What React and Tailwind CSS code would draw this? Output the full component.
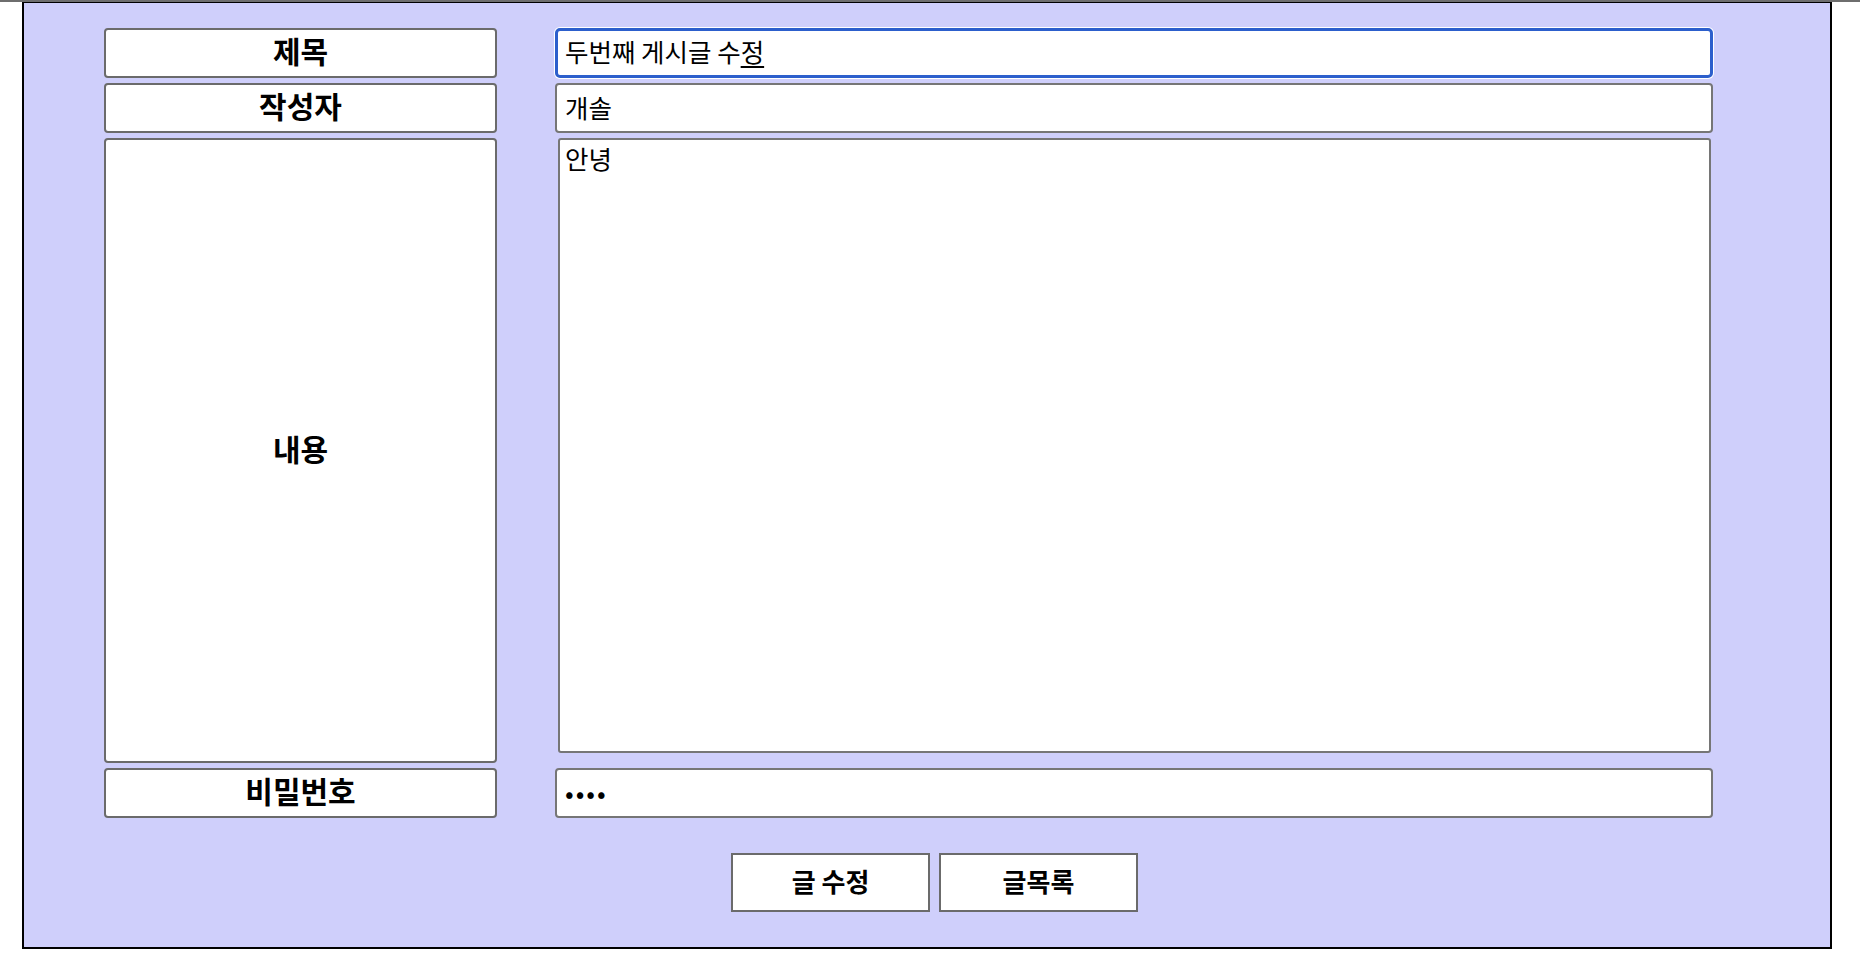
export default function App() {
  const labelBox =
    "flex items-center justify-center rounded-[4px] border-2 border-[#6b6b6b] bg-white pb-[6px] text-[30px] font-bold leading-none text-black";
  const inputBox =
    "h-[50px] w-full rounded-[4px] border-2 border-[#767676] bg-white px-[8px] pb-[4px] text-[25.5px] text-black outline-none";
  const button =
    "h-[59px] w-[199px] border-2 border-[#6b6b6b] bg-white pb-[4px] text-[26px] font-bold leading-none text-black";

  return (
    <div className="min-h-screen bg-white font-['Noto_Sans_CJK_KR','Noto_Sans',sans-serif]">
      <div className="h-[2px] bg-[#6e6e6e]" />
      <form className="ml-[22px] w-[1810px] border-x-2 border-b-2 border-t border-black bg-[#cfcffb] pb-[35px] pl-[80px] pt-[25px]">
        <div className="grid grid-cols-[393px_1158px] grid-rows-[50px_50px_625px_50px] gap-x-[58px] gap-y-[5px]">
          <div className={labelBox}>제목</div>
          <div
            role="textbox"
            className="flex h-[50px] w-full items-center rounded-[5px] border-[3px] border-[#2c5fcc] bg-white px-[7px] pb-[4px] text-[25.5px] text-black shadow-[0_0_0_1px_#ffffff]"
          >
            <span className="whitespace-pre">두번째 게시글 수</span>
            <span className="underline decoration-2 underline-offset-[4px]">정</span>
          </div>

          <div className={labelBox}>작성자</div>
          <input type="text" defaultValue="개솔" className={inputBox} />

          <div className={labelBox}>내용</div>
          <div>
            <textarea
              defaultValue="안녕"
              className="ml-[3px] block h-[615px] w-[1153px] resize-none rounded-[3px] border-2 border-[#767676] bg-white px-[5px] pt-[1px] text-[25.5px] leading-[1.3] text-black outline-none"
            />
          </div>

          <div className={labelBox}>비밀번호</div>
          <input type="password" defaultValue="1234" className={inputBox + " tracking-[2px]"} />
        </div>

        <div className="mt-[35px] flex gap-[9px] pl-[627px]">
          <button type="button" className={button}>
            글 수정
          </button>
          <button type="button" className={button}>
            글목록
          </button>
        </div>
      </form>
    </div>
  );
}
